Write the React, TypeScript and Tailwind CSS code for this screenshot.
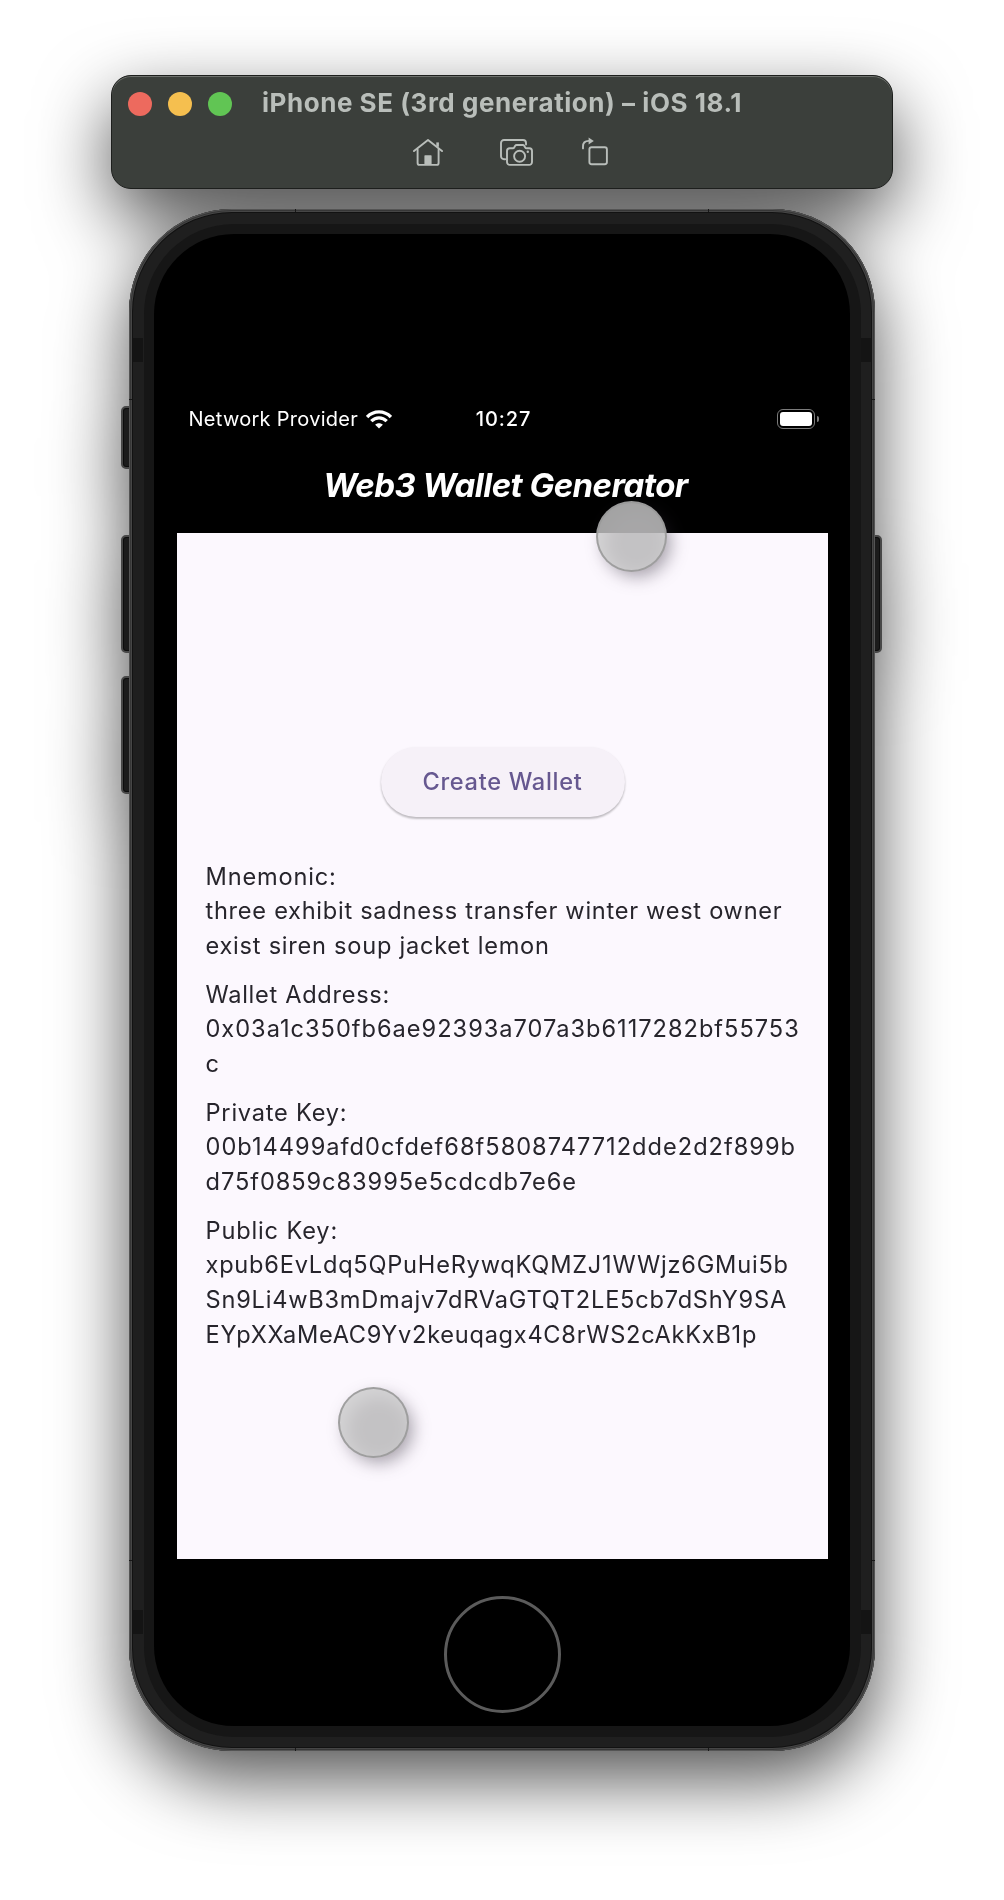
import type { ReactNode } from 'react';

function HomeIcon() {
  return (
    <svg width="30" height="28" viewBox="0 0 30 28" fill="none" stroke="#b9beba" strokeWidth="1.9" strokeLinejoin="round" strokeLinecap="round">
      <path d="M1 13.1 15 2l14 11.1" />
      <path d="M24.6 8.8V4.4" strokeWidth="2.6" strokeLinecap="butt" />
      <path d="M4.6 11.4V25a1.9 1.9 0 0 0 1.9 1.9h17.2a1.9 1.9 0 0 0 1.9-1.9V11.4" />
      <path d="M11.4 26.5v-8.6a.6.6 0 0 1 .6-.6h6a.6.6 0 0 1 .6.6v8.6z" fill="#b9beba" stroke="none" />
    </svg>
  );
}

function ScreenshotIcon() {
  return (
    <svg width="34" height="28" viewBox="0 0 34 28" fill="none" stroke="#b9beba" strokeWidth="1.9" strokeLinejoin="round" strokeLinecap="round">
      <path d="M5.2 21.2H4A3 3 0 0 1 1 18.2V5a3 3 0 0 1 3-3h19a3 3 0 0 1 3 3v1.6" />
      <path d="M9.8 10.2h3.1c.6 0 1-.3 1.3-.8l1-1.6c.3-.5.8-.8 1.4-.8h6.2c.6 0 1.1.3 1.4.8l1 1.6c.3.5.7.8 1.3.8h2.9A2.8 2.8 0 0 1 32 13v11.1a2.8 2.8 0 0 1-2.8 2.8H9.800A2.800 2.800 0 0 1 7 24.100V13a2.800 2.800 0 0 1 2.800-2.800z" />
      <circle cx="19.6" cy="18.2" r="5.5" />
      <circle cx="27.8" cy="13.7" r="1.2" fill="#b9beba" stroke="none" />
    </svg>
  );
}

function RotateIcon() {
  return (
    <svg width="27" height="29" viewBox="0 0 27 29" fill="none" stroke="#b9beba" strokeWidth="1.9" strokeLinecap="round">
      <rect x="7.4" y="10.2" width="17.5" height="17" rx="2.2" />
      <path d="M1 11.4V9.4C1 6 3.2 3.900 6.800 3.900" />
      <path d="M6.600.4 11.800 3.900 6.600 7.400z" fill="#b9beba" stroke="none" />
    </svg>
  );
}

function WifiIcon() {
  return (
    <svg width="26" height="19" viewBox="0 0 26 19" fill="none" stroke="#fff" strokeWidth="3.3">
      <path d="M1.1 7C4.3 3.7 8.5 1.9 13 1.9S21.700 3.700 24.900 7" />
      <path d="M5.300 11.200c2.100-2.100 4.800-3.300 7.700-3.300s5.600 1.200 7.700 3.300" />
      <path d="M13 18.600 9.200 14.800c1-1 2.400-1.500 3.800-1.500s2.800.5 3.800 1.500z" fill="#fff" stroke="none" />
    </svg>
  );
}

function Battery() {
  return (
    <div className="flex items-center gap-[2px]">
      <div className="h-5 w-[38px] rounded-[6px] border-[1.5px] border-[#7b7b7b] p-[2px]">
        <div className="h-full w-full rounded-[3px] bg-white" />
      </div>
      <div className="h-[6px] w-[1.5px] rounded-r-full bg-[#7b7b7b]" />
    </div>
  );
}

function Touch({ className }: { className: string }) {
  return (
    <div className={`absolute h-[71px] w-[71px] ${className}`}>
      <div className="absolute top-[9px] left-[8px] h-[66px] w-[66px] rounded-full bg-[#302838]/45 blur-[9px]" />
      <div className="absolute inset-0 rounded-full border-2 border-[#999]/90 bg-[#cccccc]/80" />
    </div>
  );
}

function SideButton({ className }: { className: string }) {
  return <div className={`absolute w-[14px] rounded-[5px] border-2 border-[#484848] bg-[#1b1b1b] shadow-[inset_0_0_0_1px_#0c0c0c] ${className}`} />;
}

function Field({ children }: { children: ReactNode }) {
  return <div className="flex flex-col whitespace-nowrap">{children}</div>;
}

export default function App() {
  return (
    <div className="h-[1900px] w-[1004px] overflow-hidden bg-white font-['Inter',sans-serif]">
      <div className="flex flex-col items-center pt-[75px] drop-shadow-[0_28px_36px_rgba(0,0,0,0.68)]">
        <header className="h-[114px] w-[782px] rounded-[20px] border border-[#1d1f1d] bg-[#3b3f3b] shadow-[inset_0_1px_0_#6d706c]">
          <div className="grid h-[56px] grid-cols-[134px_1fr_134px] items-center">
            <div className="flex gap-4 pl-4">
              <span className="h-6 w-6 rounded-full bg-[#ed6a5e]" />
              <span className="h-6 w-6 rounded-full bg-[#f5bf4f]" />
              <span className="h-6 w-6 rounded-full bg-[#61c554]" />
            </div>
            <h1 className="-mt-[3px] text-center text-[26px] leading-[30px] font-bold tracking-[0.54px] whitespace-nowrap text-[#b9beba]">
              iPhone SE (3rd generation) – iOS 18.1
            </h1>
          </div>
          <div className="flex items-start pt-[6px] pl-[301px]">
            <HomeIcon />
            <div className="ml-[57px]"><ScreenshotIcon /></div>
            <div className="-mt-px ml-[48px]"><RotateIcon /></div>
          </div>
        </header>

        <div className="relative mt-5 h-[1542px] w-[746px]">
          <SideButton className="top-[197px] -left-[8px] h-[63px]" />
          <SideButton className="top-[326px] -left-[8px] h-[118px]" />
          <SideButton className="top-[467px] -left-[8px] h-[118px]" />
          <SideButton className="top-[326px] -right-[7px] h-[118px]" />
          <div className="relative h-full rounded-[103px] bg-[#121212] p-1 shadow-[inset_0_0_0_1px_#545454,inset_0_0_0_2px_#363636,inset_0_0_0_3px_#464646]">
            <div className="h-full rounded-[99px] bg-[#1f1f1f] p-[10.5px]">
              <div className="h-full rounded-[90px] bg-[#161616] p-[10.5px]">
                <main className="flex h-full flex-col items-center rounded-[80px] bg-black">
                  <div className="h-[299px] w-[651px] pt-[165px] text-white">
                    <div className="grid h-10 grid-cols-[1fr_auto_1fr] items-center pr-[9px] pl-[12px]">
                      <div className="flex items-center gap-[7.5px]">
                        <span className="text-[20px] leading-6 tracking-[0.28px]">Network Provider</span>
                        <WifiIcon />
                      </div>
                      <span className="text-[20px] leading-6 font-medium tracking-[0.9px]">10:27</span>
                      <div className="flex justify-end"><Battery /></div>
                    </div>
                    <h2 className="mt-[26px] pl-[7px] text-center text-[33px] leading-10 font-bold tracking-[-0.54px] italic">
                      Web3 Wallet Generator
                    </h2>
                  </div>
                  <section className="flex h-[1026px] w-[651px] flex-col items-center bg-[#fcf8fe] pt-[214px] pl-px">
                    <button className="h-[70px] w-[244px] rounded-full bg-[#f6f1f8] text-[23.6px] font-medium tracking-[0.703px] text-[#665890] shadow-[0_2px_2px_rgba(0,0,0,0.2),0_1px_3px_rgba(0,0,0,0.08)]">
                      Create Wallet
                    </button>
                    <div className="mt-[42.6px] flex w-full flex-col gap-[13.9px] pl-[28px] text-[23.6px] leading-[34.72px] text-[#27252c]">
                      <Field>
                        <span className="tracking-[0.82px]">Mnemonic:</span>
                        <span className="tracking-[0.72px]">three exhibit sadness transfer winter west owner</span>
                        <span className="tracking-[0.75px]">exist siren soup jacket lemon</span>
                      </Field>
                      <Field>
                        <span className="tracking-[0.7px]">Wallet Address:</span>
                        <span className="tracking-[0.99px]">0x03a1c350fb6ae92393a707a3b6117282bf55753</span>
                        <span>c</span>
                      </Field>
                      <Field>
                        <span className="tracking-[0.78px]">Private Key:</span>
                        <span className="tracking-[1px]">00b14499afd0cfdef68f5808747712dde2d2f899b</span>
                        <span className="tracking-[0.94px]">d75f0859c83995e5cdcdb7e6e</span>
                      </Field>
                      <Field>
                        <span className="tracking-[0.84px]">Public Key:</span>
                        <span className="tracking-[0.77px]">xpub6EvLdq5QPuHeRywqKQMZJ1WWjz6GMui5b</span>
                        <span className="tracking-[0.78px]">Sn9Li4wB3mDmajv7dRVaGTQT2LE5cb7dShY9SA</span>
                        <span className="tracking-[0.72px]">EYpXXaMeAC9Yv2keuqagx4C8rWS2cAkKxB1p</span>
                      </Field>
                    </div>
                  </section>
                  <div className="mt-[37px] h-[117px] w-[117px] rounded-full border-[3.5px] border-[#5b5b5b]" />
                </main>
              </div>
            </div>
            <div className="absolute top-[129px] left-1 h-6 w-[10px] bg-[#141414]" />
            <div className="absolute top-[129px] right-1 h-6 w-[10px] bg-[#141414]" />
            <div className="absolute top-[1401px] left-1 h-6 w-[10px] bg-[#141414]" />
            <div className="absolute top-[1401px] right-1 h-6 w-[10px] bg-[#141414]" />
            <div className="absolute top-0 left-[166px] h-[3px] w-px bg-[#181818]" />
            <div className="absolute top-0 left-[579px] h-[3px] w-px bg-[#181818]" />
            <div className="absolute bottom-0 left-[166px] h-[3px] w-px bg-[#181818]" />
            <div className="absolute bottom-0 left-[579px] h-[3px] w-px bg-[#181818]" />
            <div className="absolute top-[190px] left-0 h-px w-[3px] bg-[#181818]" />
            <div className="absolute top-[190px] right-0 h-px w-[3px] bg-[#181818]" />
            <div className="absolute top-[1351px] left-0 h-px w-[3px] bg-[#181818]" />
            <div className="absolute top-[1351px] right-0 h-px w-[3px] bg-[#181818]" />
            <Touch className="top-[292px] left-[466.5px]" />
            <Touch className="top-[1178px] left-[208.5px]" />
          </div>
        </div>
      </div>
    </div>
  );
}
